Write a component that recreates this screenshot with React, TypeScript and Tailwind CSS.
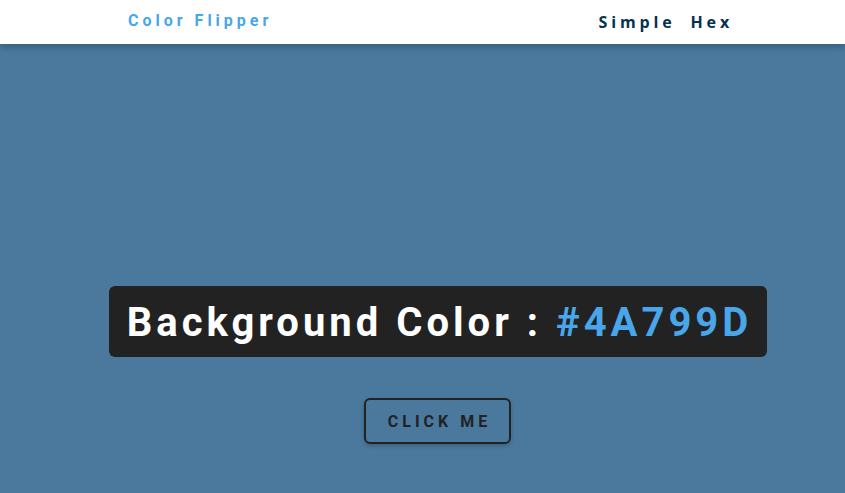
import React, { useState } from "react";

const links = ["Simple", "Hex"];

const App = () => {
    const [color] = useState("#4A799D");

    return (
        <div className="min-h-screen bg-[#4a799d]" style={{ backgroundColor: color }}>
            <nav className="h-[44px] bg-white shadow-[0_4px_6px_rgba(0,0,0,0.2)] relative z-10">
                <div className="h-full flex items-center justify-between pl-[128px] pr-[112px]">
                    <h4 className="font-['Roboto',sans-serif] font-bold text-[16px] tracking-[0.25rem] text-[#49a6e9] -mt-[2px]">
                        Color Flipper
                    </h4>
                    <ul className="flex gap-[15px] -mt-[1px]">
                        {links.map((link) => (
                            <li key={link}>
                                <a href="#" className="font-['Open_Sans',sans-serif] font-bold text-[16px] tracking-[0.24rem] text-[#063251]">
                                    {link}
                                </a>
                            </li>
                        ))}
                    </ul>
                </div>
            </nav>
            <main className="flex flex-col items-center pt-[242px] pl-[30px]">
                <div className="w-[658px] h-[71px] bg-[#222222] rounded-[6px] flex items-center justify-center">
                    <h2 className="font-['Roboto',sans-serif] font-bold text-[40px] tracking-[0.25rem] text-white leading-none pl-[0.25rem] mt-[2px]">
                        Background Color : <span className="text-[#49a6e9]">{color}</span>
                    </h2>
                </div>
                <button className="mt-[41px] w-[147px] h-[46px] border-2 border-[#222222] rounded-[6px] font-['Roboto',sans-serif] font-bold text-[16px] tracking-[0.25rem] uppercase text-[#222222] shadow-[0_2px_4px_rgba(0,0,0,0.2)] pl-[0.25rem] pt-[1px]">
                    click me
                </button>
            </main>
        </div>
    );
};

export default App;
